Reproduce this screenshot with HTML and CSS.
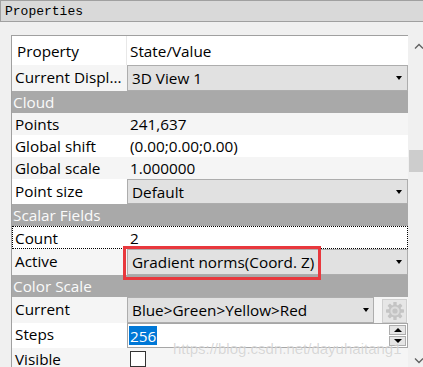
FILE: index.html
```html
<!DOCTYPE html>
<html>
<head>
<meta charset="utf-8">
<link rel="stylesheet" href="styles.css">
</head>
<body>
<div class="title">Properties</div>
<div class="main">
  <div class="tree">
    <div class="hdr"><div class="k hk">Property</div><div class="v hv">State/Value</div></div>
    <div class="row crow alt"><div class="k">Current Displ...</div><div class="combo"><span class="ct">3D View 1</span><span class="arr"></span></div></div>
    <div class="sec">Cloud</div>
    <div class="row alt"><div class="k">Points</div><div class="v">241,637</div></div>
    <div class="row"><div class="k">Global shift</div><div class="v">(0.00;0.00;0.00)</div></div>
    <div class="row alt"><div class="k">Global scale</div><div class="v">1.000000</div></div>
    <div class="row prow"><div class="k">Point size</div><div class="combo"><span class="ct">Default</span><span class="arr"></span></div></div>
    <div class="sec">Scalar Fields</div>
    <div class="row focus"><div class="k">Count</div><div class="v">2</div></div>
    <div class="row crow alt"><div class="k">Active</div><div class="combo"><span class="ct">Gradient norms(Coord. Z)</span><span class="arr"></span></div></div>
    <div class="sec">Color Scale</div>
    <div class="row crow alt"><div class="k">Current</div>
      <div class="combo short"><span class="ct">Blue&gt;Green&gt;Yellow&gt;Red</span><span class="arr"></span></div>
      <div class="gear"><svg width="20" height="20" viewBox="0 0 20 20"><g fill="#c4c4c4"><rect x="8.3" y="1" width="3.4" height="18" rx="0.6"/><rect x="8.3" y="1" width="3.4" height="18" rx="0.6" transform="rotate(45 10 10)"/><rect x="8.3" y="1" width="3.4" height="18" rx="0.6" transform="rotate(90 10 10)"/><rect x="8.3" y="1" width="3.4" height="18" rx="0.6" transform="rotate(135 10 10)"/><circle cx="10" cy="10" r="6.3"/></g><circle cx="10" cy="10" r="4.6" fill="#dcdcdc"/><circle cx="10" cy="10" r="2.6" fill="#c4c4c4"/></svg></div>
    </div>
    <div class="row srow"><div class="k">Steps</div>
      <div class="spin"><span class="sel">256</span><div class="btns"><div class="sb"><span class="up"></span></div><div class="sb"><span class="dn"></span></div></div></div>
    </div>
    <div class="row alt"><div class="k">Visible</div><div class="v"><span class="chk"></span></div></div>
  </div>
  <div class="scroll">
    <svg class="chev up-c" width="10" height="6" viewBox="0 0 10 6"><path d="M1 5.5 L5 1.5 L9 5.5" fill="none" stroke="#606060" stroke-width="1.3"/></svg>
    <div class="thumb"></div>
    <svg class="chev dn-c" width="10" height="6" viewBox="0 0 10 6"><path d="M1 0.5 L5 4.5 L9 0.5" fill="none" stroke="#606060" stroke-width="1.3"/></svg>
  </div>
</div>
<div class="redbox"></div>
<div class="wm">https://blog.csdn.net/dayuhaitang1</div>
</body>
</html>
```
FILE: styles.css
```css
html, body { margin: 0; padding: 0; }
body {
  position: relative;
  width: 423px;
  height: 367px;
  overflow: hidden;
  background: #f0f0f0;
  font-family: "Open Sans", "Noto Sans", sans-serif;
  font-size: 15.3px;
  color: #000;
}
.title {
  height: 20px;
  border-top: 1px solid #a0a0a0;
  border-bottom: 1px solid #a0a0a0;
  border-left: 1px solid #a0a0a0;
  background: #d9d9d9;
  font-family: "Liberation Mono", monospace;
  font-size: 13px;
  line-height: 21px;
  padding-left: 4px;
}
.main {
  display: flex;
  padding-top: 13px;
}
.tree {
  margin-left: 11px;
  width: 396px;
  height: 340px;
  border-left: 1px solid #a0a0a0;
  border-top: 1px solid #a0a0a0;
  background: #fff;
}
.hdr {
  display: flex;
  height: 29px;
  line-height: 30px;
  background: #fff;
}
.k {
  width: 115px;
  flex: none;
  box-sizing: border-box;
  padding-left: 3px;
  white-space: nowrap;
  overflow: hidden;
}
.hk { padding-left: 5px; border-right: 1px solid #e8e8e8; }
.v { flex: 1; padding-left: 3px; white-space: nowrap; }
.hv { padding-left: 3px; }
.row {
  display: flex;
  height: 22px;
  line-height: 23px;
}
.alt { background: #f5f5f5; }
.crow { height: 26px; line-height: 25px; }
.prow { height: 25px; line-height: 24px; }
.sec {
  height: 22px;
  line-height: 23px;
  background: #a9a9a9;
  color: #fafafa;
  padding-left: 1px;
}
.focus {
  height: 23px;
  line-height: 22px;
  border: 1px dotted #000;
  box-sizing: border-box;
  background: #fff;
}
.focus .k { padding-left: 2px; width: 114px; }
.combo {
  flex: 1;
  display: flex;
  align-items: center;
  justify-content: space-between;
  border: 1px solid #adadad;
  background: #e1e1e1;
  box-sizing: border-box;
  padding-left: 4px;
  padding-right: 5px;
  white-space: nowrap;
}
.combo.short { flex: none; width: 247px; padding-right: 4px; }
.arr {
  width: 0;
  height: 0;
  border-left: 3.5px solid transparent;
  border-right: 3.5px solid transparent;
  border-top: 4px solid #000;
}
.gear {
  width: 25px;
  height: 24px;
  box-sizing: border-box;
  margin: 2px 0 0 8px;
  border: 1px solid #cfcfcf;
  background: #e6e6e6;
  display: flex;
  align-items: center;
  justify-content: center;
}
.srow { height: 25px; }
.spin {
  flex: 1;
  display: flex;
  justify-content: space-between;
  border: 1px solid #a6a6a6;
  background: #fff;
  box-sizing: border-box;
  padding-left: 1px;
}
.sel {
  background: #0078d7;
  color: #fff;
  height: 19px;
  line-height: 20px;
  margin-top: 2px;
  padding: 0 1px;
}
.btns {
  display: flex;
  flex-direction: column;
  gap: 1px;
  margin: 1px 1px 0 0;
}
.sb {
  width: 17px;
  height: 10px;
  box-sizing: border-box;
  border: 1px solid #adadad;
  background: #e5e5e5;
  display: flex;
  align-items: center;
  justify-content: center;
}
.up, .dn { width: 0; height: 0; border-left: 4px solid transparent; border-right: 4px solid transparent; }
.up { border-bottom: 4px solid #000; }
.dn { border-top: 4px solid #000; }
.chk {
  display: inline-block;
  width: 16px;
  height: 16px;
  box-sizing: border-box;
  border: 1px solid #333;
  background: #fff;
  margin-top: 3px;
  vertical-align: top;
}
.scroll {
  position: relative;
  width: 15px;
  height: 332px;
  background: #f0f0f0;
}
.chev { position: absolute; left: 6px; }
.up-c { top: 8px; }
.dn-c { top: 323px; }
.thumb {
  position: absolute;
  left: 1px;
  top: 115px;
  width: 16px;
  height: 22px;
  background: #cdcdcd;
}
.redbox {
  position: absolute;
  left: 123px;
  top: 246px;
  width: 198px;
  height: 34px;
  box-sizing: border-box;
  border: 3px solid #e8383d;
}
.wm {
  position: absolute;
  left: 173px;
  top: 340px;
  font-family: "Liberation Sans", Arial, sans-serif;
  font-size: 15px;
  color: rgba(170, 170, 170, 0.45);
  text-shadow: 0 0 1px rgba(255,255,255,0.8);
  white-space: nowrap;
}
```
